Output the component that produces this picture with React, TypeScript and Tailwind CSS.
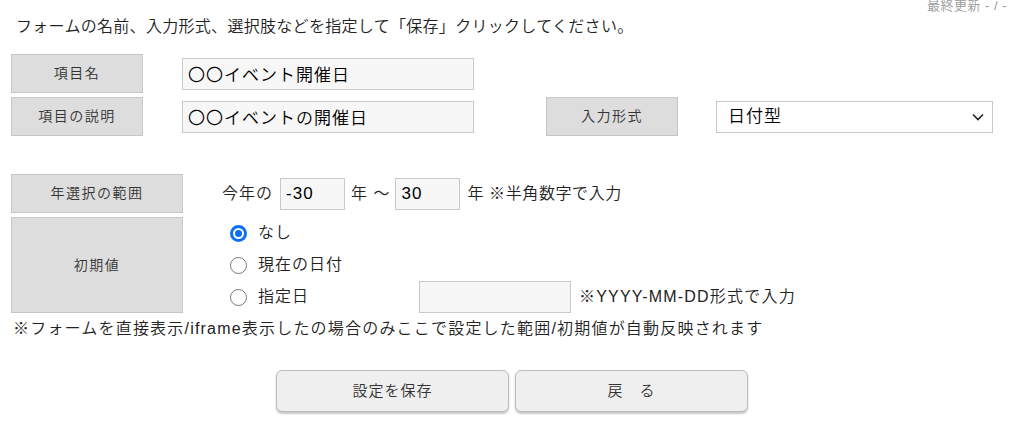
import { useState } from "react";

function Label({ text, className }: { text: string; className: string }) {
  return (
    <div
      className={`flex shrink-0 items-center justify-center border border-[#c6c6c6] bg-[#dddddd] text-[14px] tracking-[1.5px] text-[#333] ${className}`}
    >
      {text}
    </div>
  );
}

function Radio({ checked }: { checked: boolean }) {
  if (checked) {
    return (
      <span className="flex h-[17px] w-[17px] shrink-0 items-center justify-center rounded-full border-[3px] border-[#0a6ff0] bg-white">
        <span className="h-[7px] w-[7px] rounded-full bg-[#0a6ff0]" />
      </span>
    );
  }
  return (
    <span className="h-[17px] w-[17px] shrink-0 rounded-full border border-[#7a7a7a] bg-white" />
  );
}

export default function App() {
  const [initial] = useState("none");
  const field =
    "h-[32px] border border-[#c9c9c9] bg-[#f7f7f7] px-[5px] text-[17px] text-black outline-none";

  return (
    <div className="h-[438px] w-[1024px] overflow-hidden bg-white text-[16px] font-[350] tracking-[1px] text-[#222] [font-family:'Liberation_Sans','Noto_Sans_CJK_JP',sans-serif]">
      <div className="flex h-[12px] justify-end pr-[17px] text-[13px] leading-[12px] tracking-[0.5px] text-[#999]">
        最終更新 - / -
      </div>
      <p className="mt-[5px] pl-[16px] text-[16px] leading-[20px] tracking-[0.3px]">
        フォームの名前、入力形式、選択肢などを指定して「保存」クリックしてください。
      </p>

      <div className="mt-[17px] flex flex-col gap-[4px] pl-[11px]">
        <div className="flex items-center">
          <Label text="項目名" className="h-[39px] w-[132px]" />
          <input
            className={`${field} ml-[39px] w-[292px]`}
            defaultValue="〇〇イベント開催日"
          />
        </div>
        <div className="flex items-center">
          <Label text="項目の説明" className="h-[39px] w-[132px]" />
          <input
            className={`${field} ml-[39px] w-[292px]`}
            defaultValue="〇〇イベントの開催日"
          />
          <Label text="入力形式" className="ml-[72px] h-[39px] w-[132px]" />
          <div className="relative ml-[38px] w-[277px]">
            <select
              className={`${field} w-full appearance-none bg-white pl-[11px]`}
              defaultValue="date"
            >
              <option value="date">日付型</option>
            </select>
            <svg
              className="pointer-events-none absolute right-[9px] top-[12px]"
              width="12"
              height="8"
              viewBox="0 0 12 8"
            >
              <path d="M1 1.5 L6 6.5 L11 1.5" fill="none" stroke="#222" strokeWidth="1.6" />
            </svg>
          </div>
        </div>
      </div>

      <div className="mt-[38px] flex flex-col gap-[4px] pl-[11px]">
        <div className="flex items-center">
          <Label text="年選択の範囲" className="h-[39px] w-[172px]" />
          <span className="ml-[39px]">今年の</span>
          <input className={`${field} ml-[7px] w-[65px]`} defaultValue="-30" />
          <span className="ml-[6px]">年 〜</span>
          <input className={`${field} ml-[5px] w-[65px]`} defaultValue="30" />
          <span className="ml-[7px] tracking-[0.6px]">年 ※半角数字で入力</span>
        </div>
        <div className="flex">
          <Label text="初期値" className="h-[96px] w-[172px]" />
          <div className="ml-[47px] flex flex-col">
            <div className="flex h-[32px] items-center gap-[11px]">
              <Radio checked={initial === "none"} />
              <span>なし</span>
            </div>
            <div className="flex h-[32px] items-center gap-[11px]">
              <Radio checked={initial === "today"} />
              <span>現在の日付</span>
            </div>
            <div className="flex h-[32px] items-center">
              <Radio checked={initial === "fixed"} />
              <span className="ml-[11px] w-[161px]">指定日</span>
              <input className={`${field} w-[152px]`} defaultValue="" />
              <span className="ml-[8px] tracking-[1.2px]">※YYYY-MM-DD形式で入力</span>
            </div>
          </div>
        </div>
      </div>

      <p className="mt-[6px] pl-[13px] leading-[20px] tracking-[1.2px]">
        ※フォームを直接表示/iframe表示したの場合のみここで設定した範囲/初期値が自動反映されます
      </p>

      <div className="mt-[31px] flex justify-center gap-[6px]">
        <button className="h-[42px] w-[233px] rounded-[6px] border border-[#bcbcbc] bg-[#efefef] text-[15px] tracking-[1px] text-[#333] shadow-[0_2px_2px_rgba(0,0,0,0.22)]">
          設定を保存
        </button>
        <button className="h-[42px] w-[233px] rounded-[6px] border border-[#bcbcbc] bg-[#efefef] text-[15px] tracking-[1px] text-[#333] shadow-[0_2px_2px_rgba(0,0,0,0.22)]">
          戻　る
        </button>
      </div>
    </div>
  );
}
